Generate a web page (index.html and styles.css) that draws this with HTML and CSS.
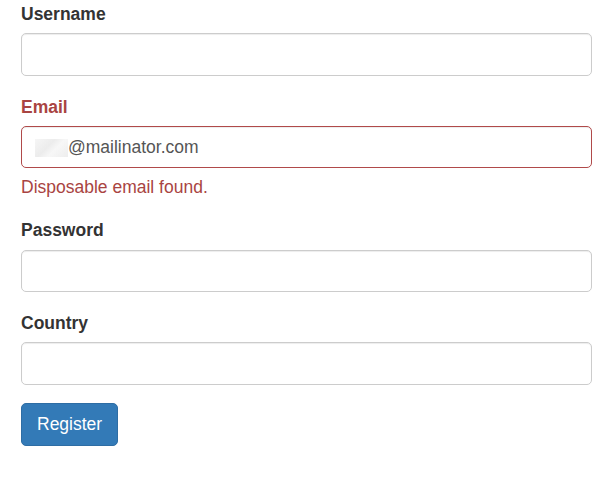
FILE: index.html
```
<!DOCTYPE html>
<html>
<head>
<meta charset="utf-8">
<link rel="stylesheet" href="styles.css">
</head>
<body>
<form class="form">
  <div class="form-group">
    <label class="label">Username</label>
    <div class="input"></div>
  </div>
  <div class="form-group has-error">
    <label class="label">Email</label>
    <div class="input input-error"><span class="redacted"></span>@mailinator.com</div>
    <div class="help-block">Disposable email found.</div>
  </div>
  <div class="form-group">
    <label class="label">Password</label>
    <div class="input"></div>
  </div>
  <div class="form-group">
    <label class="label">Country</label>
    <div class="input"></div>
  </div>
  <button type="button" class="btn">Register</button>
</form>
</body>
</html>
```
FILE: styles.css
```
html, body {
  margin: 0;
  padding: 0;
  background: #fff;
}
body {
  font-family: "Liberation Sans", Arial, sans-serif;
  font-size: 17.5px;
  line-height: 25px;
  color: #333;
}
.form {
  padding: 2px 14px 0 21px;
}
.form-group {
  margin-bottom: 18.75px;
}
.label {
  display: block;
  font-weight: bold;
  margin-bottom: 6.25px;
}
.input {
  box-sizing: border-box;
  height: 42.5px;
  border: 1px solid #ccc;
  border-radius: 5px;
  padding: 8px 15px 7px 13px;
  color: #555;
  display: flex;
  align-items: center;
  box-shadow: inset 0 1px 1px rgba(0,0,0,0.075);
}
.has-error .label,
.has-error .help-block {
  color: #a94442;
}
.input.input-error {
  border-color: #b04a4a;
}
.redacted {
  display: inline-block;
  width: 33px;
  height: 18px;
  background: linear-gradient(135deg, #f6f6f6 0%, #ececec 40%, #f7f7f7 60%, #ededed 100%);
}
.help-block {
  margin-top: 6.25px;
  margin-bottom: 12.5px;
}
.btn {
  font-family: "Liberation Sans", Arial, sans-serif;
  font-size: 17.5px;
  line-height: 25px;
  color: #fff;
  background: #337ab7;
  border: 1px solid #2e6da4;
  border-radius: 5px;
  padding: 7.5px 15px;
  height: 42.5px;
  cursor: pointer;
}
```
